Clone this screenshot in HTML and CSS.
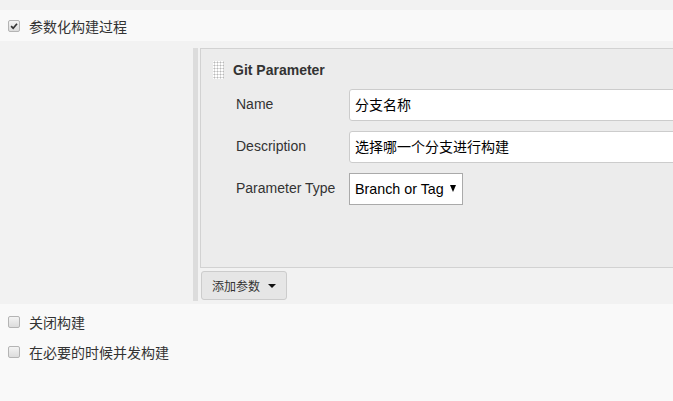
FILE: index.html
```html
<!DOCTYPE html>
<html>
<head>
<meta charset="utf-8">
<link rel="stylesheet" href="styles.css">
</head>
<body>
<div class="page">
  <div class="top-gap"></div>
  <div class="opt-row first">
    <span class="cb checked"><svg viewBox="0 0 12 12" width="12" height="12"><path d="M2.5 6.2 L5 8.6 L9.6 3.2" fill="none" stroke="#333" stroke-width="2"/></svg></span>
    <span class="opt-label">参数化构建过程</span>
  </div>
  <div class="nested">
    <div class="bar">
      <div class="panel">
        <div class="panel-head">
          <span class="grip"></span>
          <span class="panel-title">Git Parameter</span>
        </div>
        <div class="form">
          <div class="f-label">Name</div>
          <div class="f-field"><div class="input">分支名称</div></div>
          <div class="f-label">Description</div>
          <div class="f-field"><div class="input">选择哪一个分支进行构建</div></div>
          <div class="f-label">Parameter Type</div>
          <div class="f-field"><div class="select"><span>Branch or Tag</span><span class="sel-arrow"></span></div></div>
        </div>
      </div>
      <div class="btn-row">
        <div class="btn">添加参数 <span class="caret"></span></div>
      </div>
    </div>
  </div>
  <div class="lower">
    <div class="opt-row">
      <span class="cb"></span>
      <span class="opt-label">关闭构建</span>
    </div>
    <div class="opt-row">
      <span class="cb"></span>
      <span class="opt-label">在必要的时候并发构建</span>
    </div>
  </div>
</div>
</body>
</html>
```
FILE: styles.css
```css
html, body {
  margin: 0;
  padding: 0;
  width: 673px;
  height: 401px;
  overflow: hidden;
  background: #f9f9f9;
  font-family: "Liberation Sans", "Noto Sans CJK SC", sans-serif;
  font-size: 14px;
  color: #333;
}
.page {
  width: 673px;
  overflow: hidden;
}
.top-gap {
  height: 10px;
  background: #f2f2f2;
}
.opt-row {
  display: flex;
  align-items: center;
  height: 30px;
  padding-left: 8px;
}
.opt-row.first {
  height: 31px;
  background: #f9f9f9;
}
.cb {
  width: 10px;
  height: 10px;
  border: 1px solid #b4b4b4;
  border-radius: 2px;
  background: linear-gradient(#f4f4f4, #dcdcdc);
  display: flex;
  align-items: center;
  justify-content: center;
  margin-right: 9px;
  flex: none;
}
.cb svg {
  width: 10px;
  height: 10px;
}
.opt-label {
  font-size: 14px;
  color: #333;
}
.nested {
  background: #f2f2f2;
  padding: 7px 0 3px 193px;
}
.bar {
  border-left: 5px solid #dcdcdc;
  padding: 0 0 1px 2px;
}
.panel {
  width: 560px;
  height: 220px;
  background: #ececec;
  border: 1px solid #d2d2d2;
  box-sizing: border-box;
  padding: 12px 0 0 12px;
}
.panel-head {
  display: flex;
  align-items: center;
  height: 18px;
}
.grip {
  width: 11px;
  height: 18px;
  background-color: #fff;
  background-image: radial-gradient(circle, #b8b8b8 0.9px, transparent 1.1px);
  background-size: 3px 3px;
  margin-right: 9px;
}
.panel-title {
  font-weight: bold;
  font-size: 14px;
  color: #333;
}
.form {
  display: grid;
  grid-template-columns: 113px 1fr;
  row-gap: 10px;
  margin-top: 10px;
  padding-left: 23px;
}
.f-label {
  font-size: 14px;
  color: #333;
  padding-top: 7px;
}
.f-field {
  display: flex;
}
.input {
  flex: 1;
  height: 32px;
  box-sizing: border-box;
  border: 1px solid #ccc;
  border-radius: 3px;
  background: #fff;
  padding: 0 5px;
  line-height: 30px;
  font-size: 14px;
  color: #000;
}
.select {
  display: flex;
  align-items: center;
  height: 32px;
  width: 114px;
  box-sizing: border-box;
  border: 1px solid #aaa;
  background: #fff;
  padding: 0 0 0 5px;
  font-size: 14.3px;
  color: #000;
  white-space: nowrap;
}
.sel-arrow {
  width: 0;
  height: 0;
  border-left: 3.5px solid transparent;
  border-right: 3.5px solid transparent;
  border-top: 7px solid #000;
  margin-left: 6px;
  margin-top: -2px;
}
.btn-row {
  padding-top: 3px;
  padding-left: 1px;
}
.btn {
  display: inline-flex;
  align-items: center;
  height: 29px;
  box-sizing: border-box;
  padding: 0 10px 0 10px;
  background: #e6e6e6;
  border: 1px solid #ccc;
  border-radius: 3px;
  font-size: 12px;
  color: #333;
}
.caret {
  width: 0;
  height: 0;
  border-left: 4px solid transparent;
  border-right: 4px solid transparent;
  border-top: 4px solid #111;
  margin-left: 8px;
}
.lower {
  background: #f9f9f9;
  padding-top: 3px;
}
```
